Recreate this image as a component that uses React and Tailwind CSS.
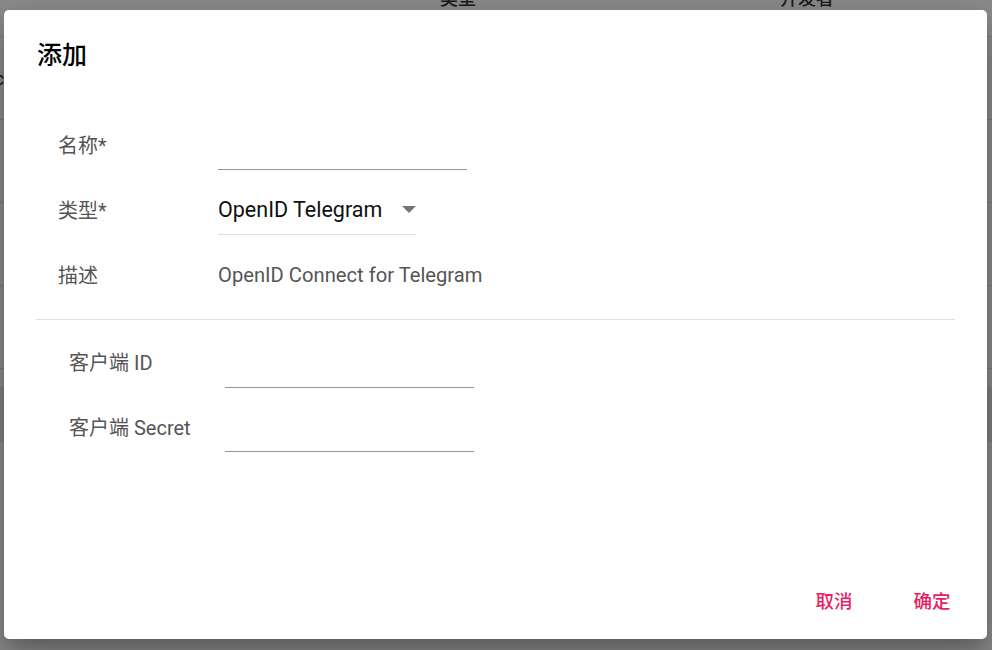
import React from 'react';

const FONT = "font-['Roboto','Noto_Sans_CJK_SC',sans-serif]";

const ROWS = [
  { id: 'oidc', type: 'OpenID Connect', dev: 'admin' },
  { id: '', type: 'OAuth 2.0', dev: 'admin' },
  { id: '', type: 'OpenID Telegram', dev: 'admin' },
  { id: '', type: 'SAML', dev: 'admin' },
];

function BackgroundPage() {
  return (
    <div className="-mt-[40px] w-full bg-white">
      <div className="flex h-[77px] items-center border-b border-[#e0e0e0] text-[18px] font-medium text-[#333]">
        <div className="w-[440px]" />
        <div className="w-[340px]">类型</div>
        <div>开发者</div>
      </div>
      {ROWS.map((r, i) => (
        <div key={i} className="flex h-[83px] items-center border-b border-[#e0e0e0] text-[18px] text-[#222]">
          <div className="-ml-[30px] w-[470px]">{r.id}</div>
          <div className="w-[340px]">{r.type}</div>
          <div>{r.dev}</div>
        </div>
      ))}
      <div className="h-[18px]" />
      <div className="h-[55px] bg-[#ececec]" />
    </div>
  );
}

function TextInput() {
  return <div className="mt-[24px] h-[33px] w-[249px] border-b border-[#949494]" />;
}

function FormRow({ label, labelWidth, children }) {
  return (
    <div className="flex h-[65px]">
      <div className={`${labelWidth} shrink-0 text-[20px] leading-[65px] text-[#555]`}>{label}</div>
      {children}
    </div>
  );
}

export default function App() {
  return (
    <div className={`relative h-[650px] w-[992px] overflow-hidden bg-white ${FONT}`}>
      <BackgroundPage />

      {/* backdrop + dialog */}
      <div className="absolute inset-0 bg-black/45 pl-[4px] pt-[10px]">
        <div className="flex h-[629px] w-[983px] flex-col rounded-[5px] bg-white shadow-[0_11px_15px_-7px_rgba(0,0,0,0.2),0_24px_38px_3px_rgba(0,0,0,0.14),0_9px_46px_8px_rgba(0,0,0,0.12)]">
          <h2 className="mt-[26px] h-[40px] pl-[33px] text-[25px] font-medium leading-[40px] text-black">添加</h2>

          <div className="mt-[38px] pl-[54px]">
            <FormRow label="名称*" labelWidth="w-[160px]">
              <div className="-mt-px">
                <TextInput />
              </div>
            </FormRow>
            <FormRow label="类型*" labelWidth="w-[160px]">
              <div className="mt-[12px] flex h-[44px] w-[198px] items-center justify-between border-b border-[#e0e0e0] pb-[4px]">
                <span className="text-[21.5px] text-[#111]">OpenID Telegram</span>
                <svg width="14" height="7" viewBox="0 0 14 7" className="mb-[2px]">
                  <path d="M0 0 L14 0 L7 7 Z" fill="#757575" />
                </svg>
              </div>
            </FormRow>
            <FormRow label="描述" labelWidth="w-[160px]">
              <div className="-mt-px text-[20.2px] leading-[65px] text-[#555]">OpenID Connect for Telegram</div>
            </FormRow>
          </div>

          <div className="mx-[32px] mt-[10px] h-px bg-[#e0e0e0]" />

          <div className="pl-[65px] pt-[11px]">
            <FormRow label="客户端 ID" labelWidth="w-[156px]">
              <TextInput />
            </FormRow>
            <FormRow label="客户端 Secret" labelWidth="w-[156px]">
              <div className="-mt-px">
                <TextInput />
              </div>
            </FormRow>
          </div>

          <div className="flex-1" />

          <div className="flex justify-end gap-[18px] pb-[14px] pr-[15px]">
            <button className="h-[45px] w-[80px] rounded-[5px] text-[18.5px] font-medium text-[#e91e63]">取消</button>
            <button className="h-[45px] w-[80px] rounded-[5px] text-[18.5px] font-medium text-[#e91e63]">确定</button>
          </div>
        </div>
      </div>
    </div>
  );
}
